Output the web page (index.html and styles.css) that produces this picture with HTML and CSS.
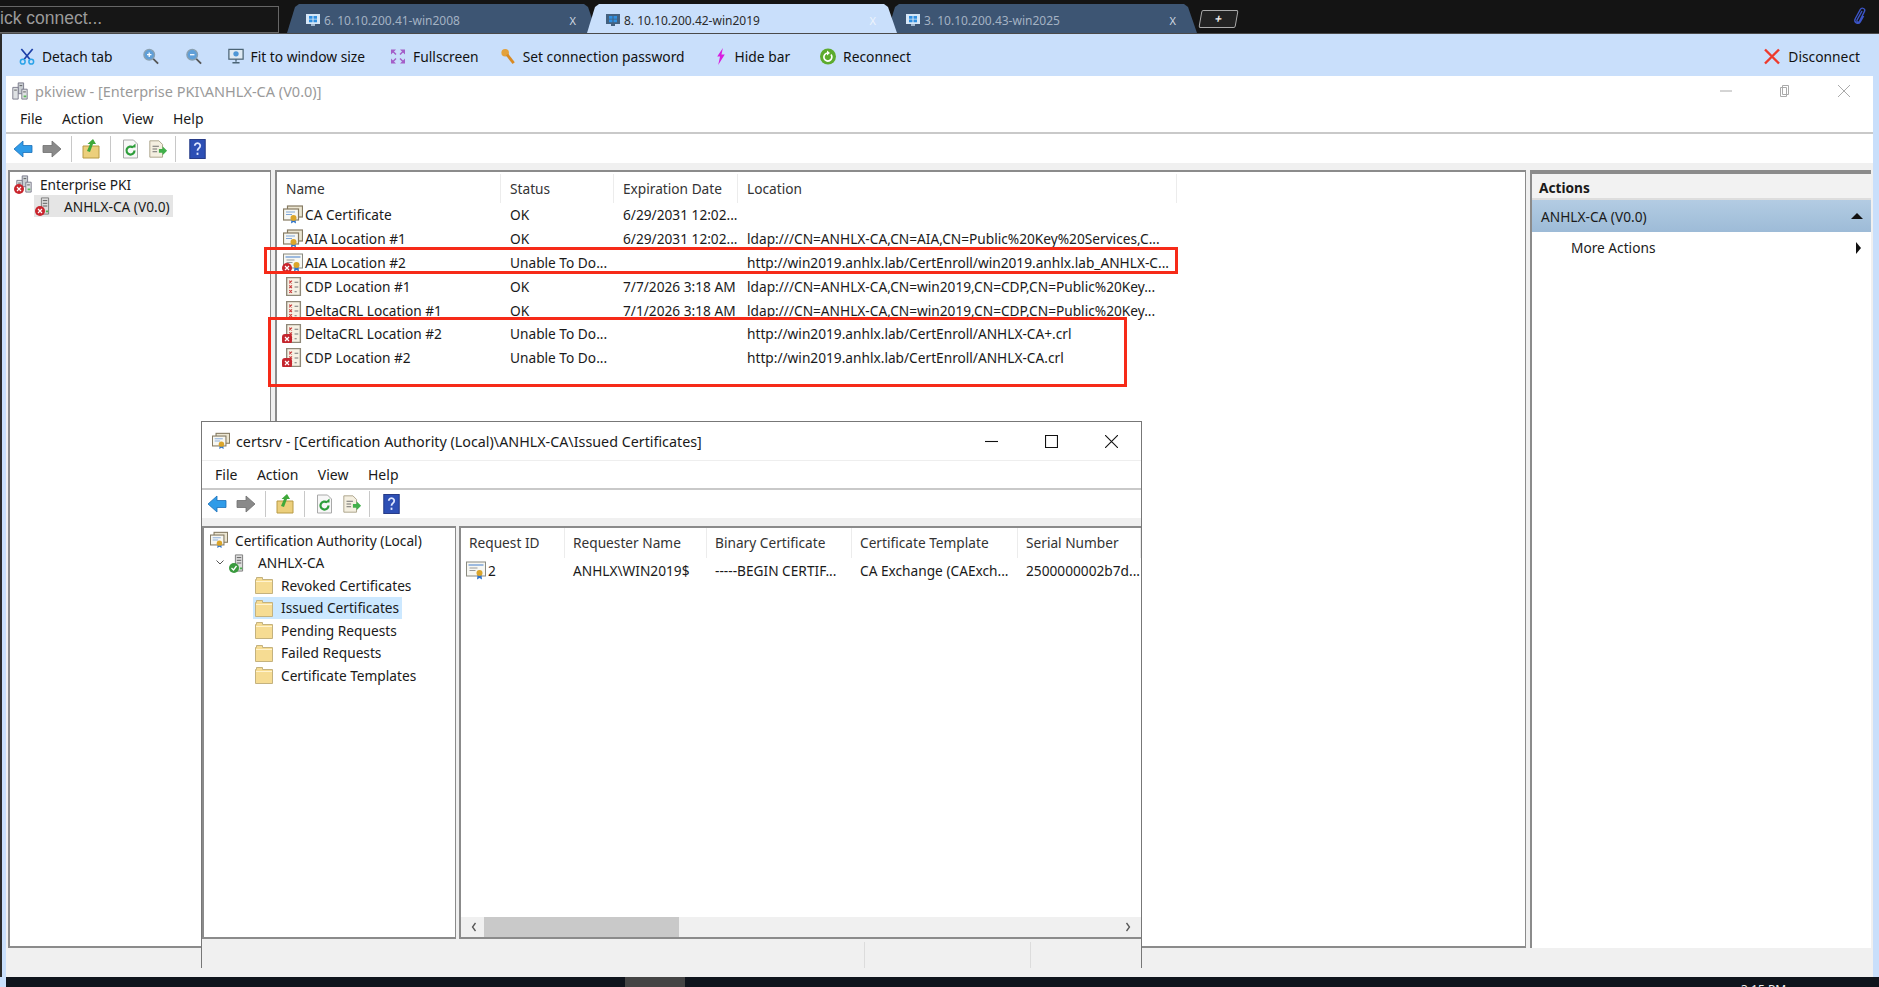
FILE: index.html
```html
<!DOCTYPE html>
<html lang="en">
<head>
    <meta charset="UTF-8">
    <title>pkiview - remote session</title>
    <link rel="stylesheet" href="styles.css">
</head>
<body>
    <!-- shared icons -->
    <svg class="defs" xmlns="http://www.w3.org/2000/svg">
        <symbol id="i-back" viewBox="0 0 20 20"><path d="M1 10 10 2v4.500h9v7h-9V18z" fill="#2f9be8" stroke="#1b6fb8" stroke-width=".8"/></symbol>
        <symbol id="i-fwd" viewBox="0 0 20 20"><path d="M19 10 10 2v4.500H1v7h9V18z" fill="#8a8a8a" stroke="#6f6f6f" stroke-width=".8"/></symbol>
        <symbol id="i-up" viewBox="0 0 20 20"><path d="M2 7h16v12H2z" fill="#eccf7c" stroke="#b89a45"/><path d="M6 12 9 5H6.500L12 0l3 5h-3L9 13z" fill="#3fa83a"/></symbol>
        <symbol id="i-refresh" viewBox="2 0 16 20"><path d="M3 1h10l4 4v14H3z" fill="#f7f7f7" stroke="#a9a9a9"/><path d="M14 11.500a4 4 0 1 1-1.400-3" fill="none" stroke="#2e9e3b" stroke-width="2.200"/><path d="M10.500 8.500h4.500v-4z" fill="#2e9e3b"/></symbol>
        <symbol id="i-export" viewBox="0 0 22 20"><path d="M2 1h10l4 4v14H2z" fill="#f4efe0" stroke="#a89f86"/><path d="M5 7h7M5 10h5M5 13h5" stroke="#666"/><path d="M12 10h4V7l5 5-5 5v-3h-4z" fill="#41b04a"/></symbol>
        <symbol id="i-help" viewBox="0 0 18 22"><rect x=".5" y=".5" width="17" height="21" fill="#2d4fb5" stroke="#1e3380"/><path d="M6 7.500a3 3 0 1 1 4.500 2.600C9.500 10.800 9 11.500 9 13" fill="none" stroke="#dfe7ff" stroke-width="2"/><rect x="8" y="15" width="2" height="2.500" fill="#dfe7ff"/></symbol>
        <symbol id="i-bad" viewBox="0 0 10 10"><circle cx="5" cy="5" r="5" fill="#c9252d"/><path d="M3 3l4 4M7 3 3 7" stroke="#fff" stroke-width="1.200"/></symbol>
        <symbol id="i-badsq" viewBox="0 0 10 10"><rect width="10" height="10" rx="3" fill="#c4262e"/><path d="M3 3l4 4M7 3 3 7" stroke="#fff" stroke-width="1.200"/></symbol>
        <symbol id="i-server" viewBox="0 0 18 20"><path d="M5 1h8v18H5z" fill="#dcdcdc" stroke="#777"/><path d="M6.500 4h5M6.500 7h5M6.500 10h5" stroke="#555"/><rect x="10" y="15" width="2.500" height="2" fill="#4caf50"/></symbol>
        <symbol id="i-farm" viewBox="0 0 20 20"><path d="M8 1h6v12H8z" fill="#c9ced2" stroke="#778"/><path d="M2 6h6v13H2zM12 8h6v11h-6z" fill="#dfe2e4" stroke="#778"/><path d="M9.500 4h3M3.500 9h3M13.500 11h3" stroke="#555"/><rect x="14" y="15" width="3" height="2" fill="#5cb85c"/></symbol>
        <symbol id="i-cert" viewBox="0 0 20 18"><rect x=".5" y=".5" width="19" height="14" fill="#f7f7f2" stroke="#8a8a80"/><path d="M2.500 3.500h15" stroke="#7fa6d8" stroke-width="1.500"/><path d="M3.500 6.500h8M3.500 9h6" stroke="#999"/><path d="M11.500 13.500 11 18l2.500-1.500L16 18l-.5-4.500z" fill="#2f73c9"/><circle cx="13.500" cy="11.500" r="3" fill="#dba52a"/></symbol>
        <symbol id="i-certs" viewBox="0 0 20 18"><rect x="4.500" y=".5" width="15" height="11" fill="#ece6d2" stroke="#857a62" stroke-width="1.200"/><rect x=".5" y="3.500" width="15" height="11" fill="#f7f7f2" stroke="#857a62" stroke-width="1.200"/><path d="M3 6.500h9M3 9h6" stroke="#7fa6d8"/><path d="M8.500 14 8 18l2.500-1.500L13 18l-.5-4z" fill="#2f73c9"/><circle cx="10.500" cy="12.500" r="3" fill="#dba52a"/></symbol>
        <symbol id="i-crl" viewBox="-3 0 19 18"><rect x=".5" y=".5" width="13" height="17" fill="#f6f1e4" stroke="#8f8878" stroke-width="1.300"/><path d="M3 3.500l2.500 2.500M5.500 3.500 3 6M3 8l2.500 2.500M5.500 8 3 10.500M3 12.500 5.500 15M5.500 12.500 3 15" stroke="#c83a3a" stroke-width="1.100"/><path d="M8 5h3.500M8 9.500h3.500M8 14h2" stroke="#777"/></symbol>
        <symbol id="i-folder" viewBox="0 0 18 18"><path d="M.5 3.500h1V1.500h6v2h10v14H.5z" fill="#f6dc93" stroke="#c4b27e"/><path d="M1 5.500h16" stroke="#fff3cf"/></symbol>
    </svg>

    <!-- session tabs -->
    <div class="tabbar">
        <div class="quick-connect">ick connect...</div>
        <div class="tabs">
            <div class="tab">
                <svg class="tab-icon" viewBox="0 0 14 13"><rect width="14" height="10" fill="#d5e6f7"/><path d="M3 2h3.500v2.700H3zM7.500 2H11v2.700H7.500zM3 5.500h3.500v2.700H3zM7.500 5.500H11v2.700H7.500z" fill="#2f8fe0"/><path d="M5 10h4v2H5z" fill="#9fb5cc"/></svg>
                <span class="tab-label">6. 10.10.200.41-win2008</span>
                <span class="tab-close">X</span>
            </div>
            <div class="tab active">
                <svg class="tab-icon" viewBox="0 0 14 13"><rect width="14" height="10" fill="#44617f"/><path d="M3 2h3.500v2.700H3zM7.500 2H11v2.700H7.500zM3 5.500h3.500v2.700H3zM7.500 5.500H11v2.700H7.500z" fill="#2f8fe0"/><path d="M5 10h4v2H5z" fill="#44617f"/></svg>
                <span class="tab-label">8. 10.10.200.42-win2019</span>
                <span class="tab-close">X</span>
            </div>
            <div class="tab">
                <svg class="tab-icon" viewBox="0 0 14 13"><rect width="14" height="10" fill="#d5e6f7"/><path d="M3 2h3.500v2.700H3zM7.500 2H11v2.700H7.500zM3 5.500h3.500v2.700H3zM7.500 5.500H11v2.700H7.500z" fill="#2f8fe0"/><path d="M5 10h4v2H5z" fill="#9fb5cc"/></svg>
                <span class="tab-label">3. 10.10.200.43-win2025</span>
                <span class="tab-close">X</span>
            </div>
        </div>
        <div class="new-tab">+</div>
        <svg class="clip" viewBox="0 0 16 24"><path d="M11 6 5 17c-1 2 2 3.500 3 1.500l6-12c1.500-3-3-5.500-5-2.500L3 15c-2.500 4.500 3.500 8 6 4l4-7" fill="none" stroke="#3c55c8" stroke-width="1.600"/></svg>
    </div>

    <!-- connection bar -->
    <div class="connbar">
        <div class="conn-item">
            <svg class="conn-icon" viewBox="0 0 16 18"><path d="M2 1l9 11M14 1 5 12" stroke="#1c3fa8" stroke-width="1.800"/><circle cx="3.500" cy="14.500" r="2.500" fill="none" stroke="#2aa3e8" stroke-width="1.600"/><circle cx="12.500" cy="14.500" r="2.500" fill="none" stroke="#2aa3e8" stroke-width="1.600"/></svg>
            <span>Detach tab</span>
        </div>
        <svg class="conn-icon zoom-in" viewBox="0 0 18 18"><path d="M11 11l6 6" stroke="#555" stroke-width="2"/><circle cx="7" cy="7" r="6" fill="#5f9fd8" stroke="#8aa0b0" stroke-width="1.500"/><path d="M4.500 7h5M7 4.500v5" stroke="#fff" stroke-width="1.400"/></svg>
        <svg class="conn-icon zoom-out" viewBox="0 0 18 18"><path d="M11 11l6 6" stroke="#555" stroke-width="2"/><circle cx="7" cy="7" r="6" fill="#5f9fd8" stroke="#8aa0b0" stroke-width="1.500"/><path d="M4.500 7h5" stroke="#fff" stroke-width="1.400"/></svg>
        <div class="conn-item fit">
            <svg class="conn-icon" viewBox="0 0 18 18"><rect x="1" y="1" width="16" height="11" fill="#dfeaf3" stroke="#4b6475" stroke-width="1.400"/><circle cx="9" cy="6" r="3" fill="#4f97d6"/><path d="M9 12v3M5 16h8" stroke="#4b6475" stroke-width="1.500"/></svg>
            <span>Fit to window size</span>
        </div>
        <div class="conn-item full">
            <svg class="conn-icon" viewBox="0 0 16 16"><path d="M1 1h5L1 6zM15 1v5l-5-5zM1 15v-5l5 5zM15 15h-5l5-5z" fill="#a45fc8"/><path d="M3 3l3 3M13 3l-3 3M3 13l3-3M13 13l-3-3" stroke="#a45fc8" stroke-width="1.500"/></svg>
            <span>Fullscreen</span>
        </div>
        <div class="conn-item key">
            <svg class="conn-icon" viewBox="0 0 16 18"><circle cx="5" cy="5" r="4" fill="#e3a13a"/><path d="M7 7l7 9" stroke="#d98a22" stroke-width="3"/></svg>
            <span>Set connection password</span>
        </div>
        <div class="conn-item bolt">
            <svg class="conn-icon" viewBox="0 0 10 18"><path d="M7 0 1 9h3l-2 9 7-11H5.500z" fill="#d81ee0"/></svg>
            <span>Hide bar</span>
        </div>
        <div class="conn-item reconnect">
            <svg class="conn-icon" viewBox="0 0 16 16"><circle cx="8" cy="8" r="8" fill="#5cab2e"/><path d="M11 6a4 4 0 1 1-3-1.500" fill="none" stroke="#fff" stroke-width="1.700"/><path d="M7 2l3 2.500L7 7z" fill="#fff"/></svg>
            <span>Reconnect</span>
        </div>
        <div class="conn-item disconnect">
            <svg class="conn-icon" viewBox="0 0 16 16"><path d="M1 1l14 14M15 1 1 15" stroke="#ee3a2c" stroke-width="2.400"/></svg>
            <span>Disconnect</span>
        </div>
    </div>

    <!-- remote desktop -->
    <div class="desktop">
        <div class="window pkiview">
            <div class="titlebar faded">
                <svg class="title-icon"><use href="#i-farm"/></svg>
                <span>pkiview - [Enterprise PKI\ANHLX-CA (V0.0)]</span>
                <div class="win-buttons">
                    <svg viewBox="0 0 12 12"><path d="M0 6h12" stroke="#aaa"/></svg>
                    <svg viewBox="0 0 12 12"><path d="M3.500.5h6v9h-6zM1.500 2.500h6v9h-6z" fill="#fff" stroke="#aaa"/></svg>
                    <svg viewBox="0 0 12 12"><path d="M0 0l12 12M12 0 0 12" stroke="#aaa"/></svg>
                </div>
            </div>
            <div class="menubar">
                <span>File</span><span>Action</span><span>View</span><span>Help</span>
            </div>
            <div class="toolbar">
                <svg class="tool"><use href="#i-back"/></svg>
                <svg class="tool"><use href="#i-fwd"/></svg>
                <i class="tool-sep"></i>
                <svg class="tool"><use href="#i-up"/></svg>
                <i class="tool-sep"></i>
                <svg class="tool small refresh"><use href="#i-refresh"/></svg>
                <svg class="tool export"><use href="#i-export"/></svg>
                <i class="tool-sep"></i>
                <svg class="tool small"><use href="#i-help"/></svg>
            </div>
            <div class="panes">
                <div class="pane tree-pane">
                    <div class="tree-row root">
                        <span class="badged"><svg class="ic"><use href="#i-farm"/></svg><svg class="bad"><use href="#i-bad"/></svg></span>
                        <span>Enterprise PKI</span>
                    </div>
                    <div class="tree-row child">
                        <span class="child-sel">
                            <span class="badged"><svg class="ic"><use href="#i-server"/></svg><svg class="bad"><use href="#i-bad"/></svg></span>
                            <span>ANHLX-CA (V0.0)</span>
                        </span>
                    </div>
                </div>
                <div class="pane list-pane">
                    <div class="row head">
                        <span>Name</span><span>Status</span><span>Expiration Date</span><span>Location</span>
                    </div>
                    <div class="row">
                        <span class="name"><svg class="ic"><use href="#i-certs"/></svg>CA Certificate</span><span>OK</span><span>6/29/2031 12:02...</span><span></span>
                    </div>
                    <div class="row">
                        <span class="name"><svg class="ic"><use href="#i-certs"/></svg>AIA Location #1</span><span>OK</span><span>6/29/2031 12:02...</span><span>ldap:///CN=ANHLX-CA,CN=AIA,CN=Public%20Key%20Services,C...</span>
                    </div>
                    <div class="row">
                        <span class="name"><span class="badged"><svg class="ic"><use href="#i-cert"/></svg><svg class="bad"><use href="#i-bad"/></svg></span>AIA Location #2</span><span>Unable To Do...</span><span></span><span>http://win2019.anhlx.lab/CertEnroll/win2019.anhlx.lab_ANHLX-C...</span>
                    </div>
                    <div class="row">
                        <span class="name"><svg class="ic"><use href="#i-crl"/></svg>CDP Location #1</span><span>OK</span><span>7/7/2026 3:18 AM</span><span>ldap:///CN=ANHLX-CA,CN=win2019,CN=CDP,CN=Public%20Key...</span>
                    </div>
                    <div class="row">
                        <span class="name"><svg class="ic"><use href="#i-crl"/></svg>DeltaCRL Location #1</span><span>OK</span><span>7/1/2026 3:18 AM</span><span>ldap:///CN=ANHLX-CA,CN=win2019,CN=CDP,CN=Public%20Key...</span>
                    </div>
                    <div class="row">
                        <span class="name"><span class="badged"><svg class="ic"><use href="#i-crl"/></svg><svg class="bad"><use href="#i-badsq"/></svg></span>DeltaCRL Location #2</span><span>Unable To Do...</span><span></span><span>http://win2019.anhlx.lab/CertEnroll/ANHLX-CA+.crl</span>
                    </div>
                    <div class="row">
                        <span class="name"><span class="badged"><svg class="ic"><use href="#i-crl"/></svg><svg class="bad"><use href="#i-badsq"/></svg></span>CDP Location #2</span><span>Unable To Do...</span><span></span><span>http://win2019.anhlx.lab/CertEnroll/ANHLX-CA.crl</span>
                    </div>
                </div>
                <div class="pane actions-pane">
                    <div class="actions-title">Actions</div>
                    <div class="actions-group"><span>ANHLX-CA (V0.0)</span><i class="tri-up"></i></div>
                    <div class="actions-item"><span>More Actions</span><i class="tri-right"></i></div>
                </div>
            </div>
            <div class="statusbar"></div>
        </div>

        <!-- red marks drawn on top of the capture -->
        <div class="mark mark-one"></div>
        <div class="mark mark-two"></div>

        <div class="window certsrv">
            <div class="titlebar">
                <svg class="title-icon"><use href="#i-certs"/></svg>
                <span>certsrv - [Certification Authority (Local)\ANHLX-CA\Issued Certificates]</span>
                <div class="win-buttons">
                    <svg viewBox="0 0 12 12"><path d="M0 6h12" stroke="#111"/></svg>
                    <svg viewBox="0 0 12 12"><path d="M.5.5h11v11H.5z" fill="none" stroke="#111"/></svg>
                    <svg viewBox="0 0 12 12"><path d="M0 0l12 12M12 0 0 12" stroke="#111"/></svg>
                </div>
            </div>
            <div class="menubar">
                <span>File</span><span>Action</span><span>View</span><span>Help</span>
            </div>
            <div class="toolbar">
                <svg class="tool"><use href="#i-back"/></svg>
                <svg class="tool"><use href="#i-fwd"/></svg>
                <i class="tool-sep"></i>
                <svg class="tool"><use href="#i-up"/></svg>
                <i class="tool-sep"></i>
                <svg class="tool small refresh"><use href="#i-refresh"/></svg>
                <svg class="tool export"><use href="#i-export"/></svg>
                <i class="tool-sep"></i>
                <svg class="tool small"><use href="#i-help"/></svg>
            </div>
            <div class="panes">
                <div class="pane ca-tree">
                    <div class="ca-row"><svg class="ic"><use href="#i-certs"/></svg><span>Certification Authority (Local)</span></div>
                    <div class="ca-row ca-node">
                        <svg class="chevron" viewBox="0 0 8 5"><path d="M.5.500 4 4 7.500.5" fill="none" stroke="#555"/></svg>
                        <span class="badged"><svg class="ic"><use href="#i-server"/></svg><svg class="bad ok" viewBox="0 0 10 10"><circle cx="5" cy="5" r="5" fill="#3a9a3e"/><path d="M2.500 5 4.500 7 7.500 3" fill="none" stroke="#fff" stroke-width="1.300"/></svg></span>
                        <span>ANHLX-CA</span>
                    </div>
                    <div class="ca-row ca-leaf"><svg class="folder"><use href="#i-folder"/></svg><span>Revoked Certificates</span></div>
                    <div class="ca-row ca-leaf selected"><svg class="folder"><use href="#i-folder"/></svg><span>Issued Certificates</span></div>
                    <div class="ca-row ca-leaf"><svg class="folder"><use href="#i-folder"/></svg><span>Pending Requests</span></div>
                    <div class="ca-row ca-leaf"><svg class="folder"><use href="#i-folder"/></svg><span>Failed Requests</span></div>
                    <div class="ca-row ca-leaf"><svg class="folder"><use href="#i-folder"/></svg><span>Certificate Templates</span></div>
                </div>
                <div class="pane ca-list">
                    <div class="ca-rows">
                        <div class="cert-row head">
                            <span>Request ID</span><span>Requester Name</span><span>Binary Certificate</span><span>Certificate Template</span><span>Serial Number</span>
                        </div>
                        <div class="cert-row">
                            <span class="name"><svg class="ic"><use href="#i-cert"/></svg>2</span><span>ANHLX\WIN2019$</span><span>-----BEGIN CERTIF...</span><span>CA Exchange (CAExch...</span><span>2500000002b7d...</span>
                        </div>
                    </div>
                    <div class="hscroll">
                        <svg viewBox="0 0 6 10"><path d="M4.500 1 1.500 5l3 4" fill="none" stroke="#555" stroke-width="1.300"/></svg>
                        <div class="hscroll-track"><div class="hscroll-thumb"></div></div>
                        <svg viewBox="0 0 6 10"><path d="M1.500 1l3 4-3 4" fill="none" stroke="#555" stroke-width="1.300"/></svg>
                    </div>
                </div>
            </div>
            <div class="statusbar split"><i></i><i></i></div>
        </div>
    </div>

    <!-- remote taskbar, cut off by the capture -->
    <div class="taskbar">
        <div class="task-active"></div>
        <span class="clock">3:15 PM</span>
    </div>
</body>
</html>
```

FILE: styles.css
```css
body {
    margin: 0;
    padding: 0;
    width: 1879px;
    height: 987px;
    overflow: hidden;
    display: flex;
    flex-direction: column;
    font-family: "Noto Sans", "Open Sans", sans-serif;
    font-size: 13.700px;
    color: #1a1a1a;
    background-color: #c9dffb;
}

.defs {
    display: none;
}

/* session tabs */
.tabbar {
    height: 34px;
    flex: none;
    background-color: #141414;
    display: flex;
    align-items: flex-end;
    border-bottom: 1px solid #4a4a4a;
    box-sizing: border-box;
}

.quick-connect {
    width: 279px;
    height: 27px;
    flex: none;
    box-sizing: border-box;
    border: 1px solid #666;
    border-left: none;
    font-family: "Liberation Sans", sans-serif;
    font-size: 17.500px;
    line-height: 23px;
    color: #9a9a9a;
    background-color: #161616;
    overflow: hidden;
}

.tabs {
    display: flex;
}

.tab {
    width: 318px;
    height: 29px;
    flex: none;
    margin-right: -18px;
    box-sizing: border-box;
    padding: 3px 21px 0 27px;
    display: flex;
    align-items: center;
    gap: 4px;
    background-color: #3d5573;
    color: #a4b2c3;
    font-size: 12px;
    clip-path: polygon(8px 100%, 16px 10%, 20px 0, calc(100% - 13px) 0, calc(100% - 9px) 10%, 100% 100%);
}

.tab.active {
    background-color: #c9dffb;
    color: #2b2b2b;
    z-index: 1;
}

.tab-icon {
    width: 14px;
    height: 13px;
    flex: none;
}

.tab-label {
    flex: 1;
}

.tab-close {
    font-size: 11px;
    color: #d0d8e2;
}

.tab.active .tab-close {
    color: #eef4fc;
}

.new-tab {
    width: 35px;
    height: 16px;
    margin: 0 0 5px 21px;
    border: 1px solid #aaa;
    border-radius: 2px;
    background-color: #222;
    color: #eee;
    font-size: 12px;
    font-weight: bold;
    line-height: 15px;
    text-align: center;
    transform: skewX(-10deg);
}

.clip {
    width: 15px;
    height: 20px;
    margin: 0 12px 7px auto;
}

/* connection bar */
.connbar {
    height: 42px;
    flex: none;
    padding: 3px 19px 0;
    box-sizing: border-box;
    display: flex;
    align-items: center;
    background-color: #c9dffb;
    color: #111;
    font-size: 13.800px;
    box-shadow: inset 2px 0 0 #2a2a2a;
}

.conn-item {
    display: flex;
    align-items: center;
    gap: 7px;
}

.conn-icon {
    width: 16px;
    height: 17px;
    flex: none;
}

.zoom-in {
    margin-left: 30px;
}

.zoom-out {
    margin-left: 27px;
}

.fit {
    margin-left: 26px;
    gap: 7px;
}

.full {
    margin-left: 25px;
}

.key {
    margin-left: 21px;
}

.bolt {
    margin-left: 28px;
    gap: 6px;
}

.reconnect {
    margin-left: 30px;
}

.disconnect {
    margin-left: auto;
    gap: 8px;
}

/* remote desktop */
.desktop {
    flex: 1;
    min-height: 0;
    padding: 0 6px;
    position: relative;
    display: flex;
    box-shadow: inset 2px 0 0 #2a2a2a;
}

.window {
    display: flex;
    flex-direction: column;
    background-color: #fff;
    box-sizing: border-box;
}

.pkiview {
    flex: 1;
    min-width: 0;
}

.titlebar {
    height: 29px;
    flex: none;
    padding-left: 5px;
    display: flex;
    align-items: center;
    gap: 6px;
    font-size: 14.500px;
    background-color: #fff;
}

.titlebar.faded {
    color: #9a9a9a;
}

.title-icon {
    width: 18px;
    height: 18px;
    flex: none;
}

.win-buttons {
    margin-left: auto;
    display: flex;
    gap: 47px;
    padding-right: 23px;
}

.win-buttons svg {
    width: 12px;
    height: 12px;
}

.menubar {
    height: 27px;
    flex: none;
    padding-left: 14px;
    display: flex;
    align-items: center;
    gap: 19.500px;
    font-size: 14px;
    background-color: #fff;
    border-bottom: 2px solid #c9c9c9;
}

.toolbar {
    height: 28px;
    flex: none;
    padding: 1px 0 0 7px;
    box-sizing: content-box;
    display: flex;
    align-items: center;
    gap: 9px;
    background-color: #fff;
    border-bottom: 7px solid #f0f0f0;
}

.tool {
    width: 20px;
    height: 20px;
    flex: none;
}

.tool.small {
    width: 17px;
    margin-left: 4px;
}

.tool.refresh {
    margin-left: 2px;
}

.tool.export {
    margin-right: -2px;
}

.tool-sep {
    width: 1px;
    height: 26px;
    background-color: #c8c8c8;
}

.panes {
    flex: 1;
    min-height: 0;
    display: flex;
    gap: 4px;
    background-color: #f0f0f0;
    padding: 0 2px;
}

.pane {
    background-color: #fff;
    box-sizing: border-box;
    border-style: solid;
    border-color: #8b8b8b;
    border-width: 2px 1px 2px 2px;
}

.tree-pane {
    width: 263px;
    flex: none;
    padding: 1px 0 0 5px;
}

.tree-row {
    height: 22px;
    display: flex;
    align-items: center;
    gap: 7px;
}

.child {
    padding-left: 19px;
}

.child-sel {
    display: flex;
    align-items: center;
    gap: 10px;
    height: 22px;
    padding: 0 3px 0 2px;
    background-color: #e5e5e5;
}

.badged {
    position: relative;
    display: inline-flex;
    width: 18px;
    height: 18px;
    flex: none;
}

.ic {
    width: 18px;
    height: 18px;
    flex: none;
}

.name .ic,
.name .badged {
    width: 20px;
    height: 19px;
}

.bad {
    position: absolute;
    left: -1px;
    bottom: -1px;
    width: 10px;
    height: 10px;
}

.list-pane {
    width: 1251px;
    flex: none;
    padding-top: 2px;
}

.row {
    display: grid;
    grid-template-columns: 224px 113px 124px 439px;
    height: 23.800px;
    align-items: center;
    white-space: nowrap;
}

.row > span {
    padding-left: 9px;
    overflow: hidden;
}

.row.head {
    height: 29px;
    color: #333;
}

.row.head > span {
    height: 29px;
    line-height: 30px;
    box-sizing: border-box;
    border-right: 1px solid #ececec;
}

.row > .name {
    padding-left: 6px;
    display: flex;
    align-items: center;
    gap: 2px;
}

.actions-pane {
    flex: 1;
    min-width: 0;
    border-width: 4px 0 0 2px;
    border-color: #8b8b8b;
}

.actions-title {
    height: 24px;
    line-height: 28px;
    padding-left: 7px;
    font-weight: bold;
    background-color: #f2f2f2;
    border-bottom: 2px solid #ddd;
}

.actions-group {
    height: 32px;
    padding: 0 8px 0 9px;
    display: flex;
    align-items: center;
    justify-content: space-between;
    background: linear-gradient(#b3cce3, #9dbbd7);
}

.actions-item {
    height: 31px;
    padding: 0 10px 0 39px;
    display: flex;
    align-items: center;
    justify-content: space-between;
}

.tri-up {
    border: 5px solid transparent;
    border-top: none;
    border-bottom: 6px solid #111;
    border-left-width: 6px;
    border-right-width: 6px;
}

.tri-right {
    border: 6px solid transparent;
    border-right: none;
    border-left: 5px solid #111;
}

.statusbar {
    height: 29px;
    flex: none;
    background-color: #f0f0f0;
}

/* annotations on the screenshot */
.mark {
    position: absolute;
    border: 3px solid #f62a18;
    box-sizing: border-box;
    pointer-events: none;
}

.mark-one {
    left: 264px;
    top: 171px;
    width: 914px;
    height: 27px;
}

.mark-two {
    left: 268px;
    top: 241px;
    width: 859px;
    height: 70px;
}

/* second window */
.certsrv {
    position: absolute;
    left: 201px;
    top: 345px;
    width: 941px;
    height: 547px;
    border: 1px solid #777;
    border-bottom: none;
}

.certsrv .titlebar {
    height: 39px;
    box-sizing: border-box;
    padding-left: 10px;
    font-size: 14.300px;
    border-bottom: 1px solid #eee;
}

.certsrv .win-buttons svg {
    width: 13px;
    height: 13px;
}

.certsrv .menubar {
    height: 27px;
    padding-left: 13px;
}

.certsrv .toolbar {
    height: 28px;
    padding: 0 0 0 5px;
    border-bottom-width: 8px;
}

.certsrv .panes {
    gap: 3px;
    padding: 0;
}

.ca-tree {
    width: 254px;
    flex: none;
    padding: 1px 0 0 6px;
}

.ca-row {
    height: 22.500px;
    display: flex;
    align-items: center;
    gap: 7px;
    white-space: nowrap;
}

.ca-node {
    padding-left: 6px;
    gap: 0;
}

.ca-node .chevron {
    width: 8px;
    height: 5px;
    margin-right: 6px;
}

.ca-node .badged {
    margin-right: 10px;
}

.ca-leaf {
    padding-left: 45px;
    gap: 8px;
}

.selected {
    position: relative;
    z-index: 0;
}

.selected::before {
    content: "";
    position: absolute;
    z-index: -1;
    left: 43px;
    top: 0;
    width: 149px;
    height: 100%;
    background-color: #cce8ff;
}

.folder {
    width: 18px;
    height: 18px;
    flex: none;
}

.ca-list {
    flex: 1;
    min-width: 0;
    display: flex;
    flex-direction: column;
    border-right: none;
}

.ca-rows {
    flex: 1;
}

.cert-row {
    display: grid;
    grid-template-columns: 104px 142px 145px 166px auto;
    height: 24px;
    align-items: center;
    white-space: nowrap;
}

.cert-row > span {
    padding-left: 8px;
}

.cert-row.head {
    height: 30px;
    color: #333;
}

.cert-row.head > span {
    height: 30px;
    line-height: 30px;
    box-sizing: border-box;
    border-right: 1px solid #ececec;
}

.cert-row > .name {
    padding-left: 5px;
    display: flex;
    align-items: center;
    gap: 2px;
}

.hscroll {
    height: 20px;
    flex: none;
    padding: 0 10px;
    display: flex;
    align-items: center;
    gap: 7px;
    background-color: #f0f0f0;
}

.hscroll svg {
    width: 6px;
    height: 10px;
    flex: none;
}

.hscroll-track {
    flex: 1;
    height: 100%;
}

.hscroll-thumb {
    width: 195px;
    height: 100%;
    background-color: #c9c9c9;
}

.statusbar.split {
    display: flex;
    justify-content: flex-end;
    padding: 3px 0 0;
    box-sizing: border-box;
}

.statusbar.split i {
    width: 1px;
    height: 100%;
    background-color: #dcdcdc;
}

.statusbar.split i:nth-child(1) {
    margin-right: 165px;
}

.statusbar.split i:nth-child(2) {
    margin-right: 110px;
}

/* taskbar */
.taskbar {
    height: 10px;
    flex: none;
    margin-left: 6px;
    position: relative;
    overflow: hidden;
    background-color: #0f141c;
}

.task-active {
    position: absolute;
    left: 619px;
    top: 0;
    width: 60px;
    height: 10px;
    background-color: #444;
}

.clock {
    position: absolute;
    left: 1735px;
    top: 5px;
    font-size: 12px;
    line-height: 16px;
    color: #eee;
}
```
